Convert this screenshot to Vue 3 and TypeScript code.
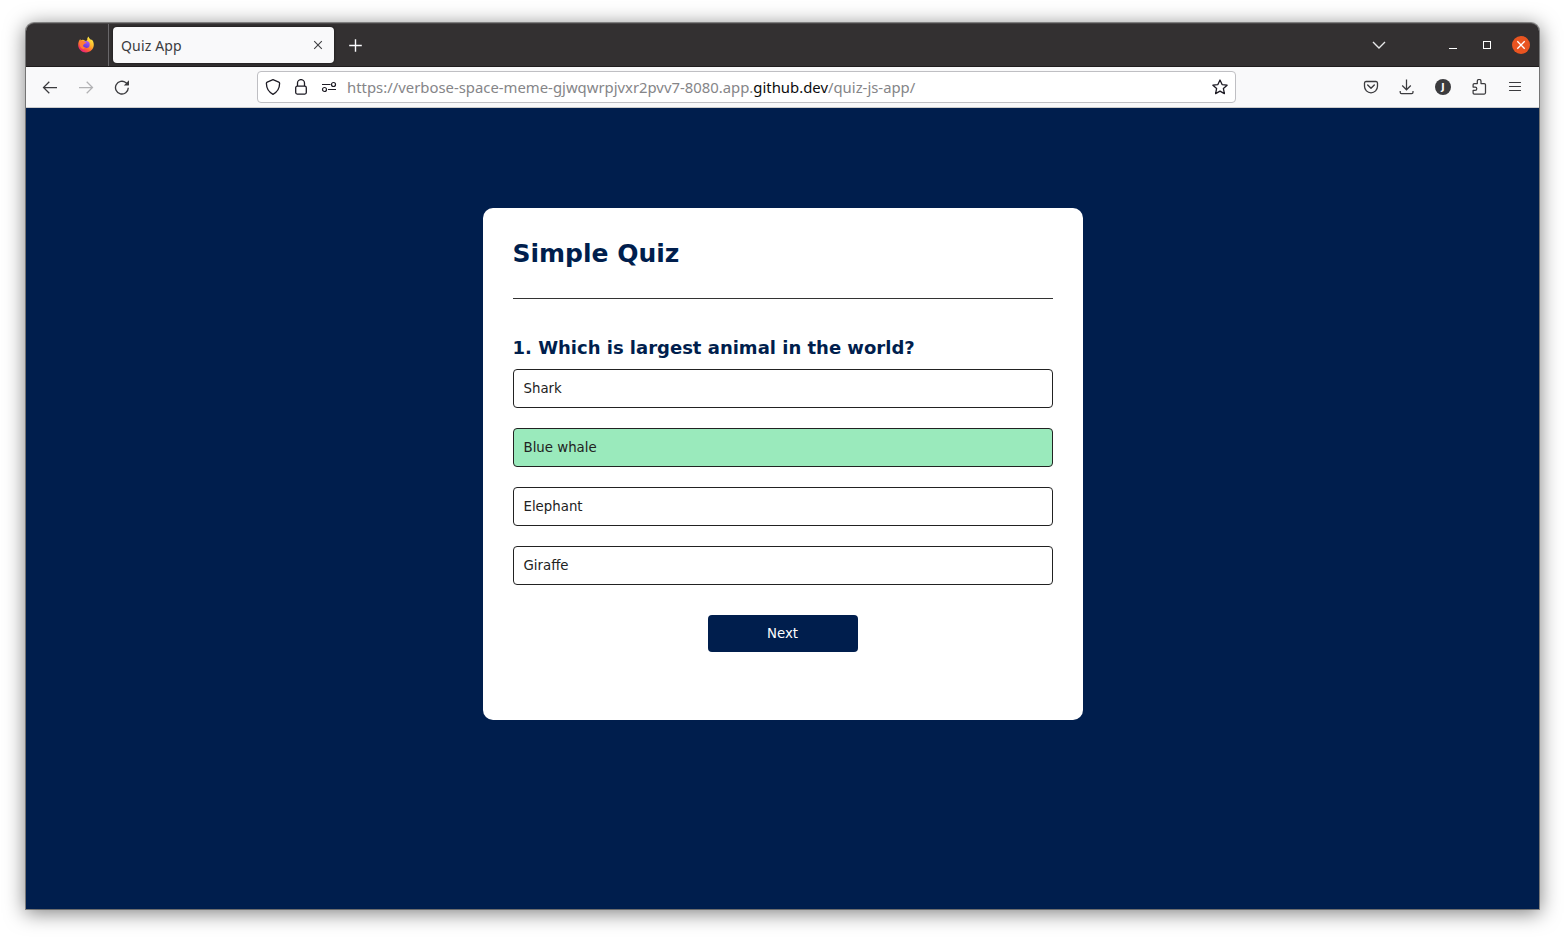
<script setup lang="ts">
import { ref } from 'vue'

interface Answer {
  text: string
  correct: boolean
}

const question = '1. Which is largest animal in the world?'
const answers: Answer[] = [
  { text: 'Shark', correct: false },
  { text: 'Blue whale', correct: true },
  { text: 'Elephant', correct: false },
  { text: 'Giraffe', correct: false },
]
const selected = ref<number>(1)
</script>

<template>
  <div class="desktop">
    <div class="window">
      <header class="tabbar">
        <div class="pinned">
          <svg width="18" height="18" viewBox="0 0 18 18">
            <defs>
              <linearGradient id="flame" x1="0.85" y1="0.1" x2="0.25" y2="1">
                <stop offset="0" stop-color="#fff044" />
                <stop offset="0.4" stop-color="#ffb02c" />
                <stop offset="0.7" stop-color="#ff5a36" />
                <stop offset="1" stop-color="#e31587" />
              </linearGradient>
              <linearGradient id="globe" x1="0.7" y1="0" x2="0.3" y2="1">
                <stop offset="0" stop-color="#a95cff" />
                <stop offset="1" stop-color="#5b35d8" />
              </linearGradient>
            </defs>
            <path d="M1.2 9.300C1 6.900 2 4.700 3.300 3.100L3.700 4.500C4.500 3.900 5.500 3.700 6.500 3.900L9 4.900L10.300 4C10 2.400 10.600 1.100 11.600.4C11.900 2.200 13 2.800 14.200 3.900L14.700 3.500C16 4.700 16.900 6.700 16.800 9.100C16.600 13.400 13.200 16.500 9 16.500C4.700 16.500 1.400 13.300 1.200 9.300Z" fill="url(#flame)" />
            <circle cx="9.200" cy="8.400" r="3.500" fill="url(#globe)" />
            <path d="M2.800 5.400C4.500 4.400 6.600 4.700 7.800 6L9.600 6.200C9.300 7.100 8.500 7.200 7.700 7.600C6.900 8.100 7.100 8.800 6.200 9C5.600 10.900 7.400 11.900 9.300 11.300L6.500 12.900C3.700 12.400 2.100 9.400 2.800 5.400Z" fill="#ff7d35" />
          </svg>
        </div>
        <div class="tab">
          <span class="tab-title">Quiz App</span>
          <svg class="tab-close" width="10" height="10" viewBox="0 0 10 10">
            <path d="M1.200 1.200L8.800 8.800M8.800 1.200L1.200 8.800" stroke="#3f3f42" stroke-width="1.100" fill="none" />
          </svg>
        </div>
        <svg class="new-tab" width="14" height="14" viewBox="0 0 14 14">
          <path d="M7.500 1.200V13.800M1.200 7.500H13.800" stroke="#fbfbfe" stroke-width="1.400" fill="none" />
        </svg>
        <div class="window-tools">
          <svg width="14" height="10" viewBox="0 0 14 10">
            <path d="M1 2L7 8L13 2" fill="none" stroke="#e8e8ea" stroke-width="1.400" />
          </svg>
          <svg class="minimize" width="8" height="10" viewBox="0 0 8 10">
            <path d="M0 7.500H8" stroke="#fff" />
          </svg>
          <svg class="maximize" width="8" height="8" viewBox="0 0 8 8">
            <rect x=".5" y=".5" width="7" height="7" fill="none" stroke="#fff" />
          </svg>
          <svg class="close" width="18" height="18" viewBox="0 0 18 18">
            <circle cx="9" cy="9" r="9" fill="#e95420" />
            <path d="M5.300 5.300L12.700 12.700M12.700 5.300L5.300 12.700" stroke="#fff" stroke-width="1.300" />
          </svg>
        </div>
      </header>

      <nav class="toolbar">
        <div class="nav-buttons">
          <svg width="16" height="16" viewBox="0 0 16 16">
            <path d="M15 8.500H1.600M7.300 2.700L1.500 8.500L7.300 14.300" fill="none" stroke="#3b3b3e" stroke-width="1.250" />
          </svg>
          <svg width="16" height="16" viewBox="0 0 16 16">
            <path d="M1 8.500H14.400M8.700 2.700L14.500 8.500L8.700 14.300" fill="none" stroke="#b2b2b4" stroke-width="1.250" />
          </svg>
          <svg width="16" height="16" viewBox="0 0 16 16">
            <path d="M14.300 8.800A6.400 6.400 0 1 1 12 3.700L14 5.400" fill="none" stroke="#3b3b3e" stroke-width="1.350" />
            <path d="M15 1.300V6.100A.4.4 0 0 1 14.600 6.500H9.800Z" fill="#3b3b3e" />
          </svg>
        </div>
        <div class="urlbar">
          <svg width="16" height="16" viewBox="0 0 16 16">
            <path d="M8 .7L13.800 3.100Q14.700 3.500 14.600 4.600Q14.500 12 8 15.300Q1.500 12 1.400 4.600Q1.300 3.500 2.200 3.100Z" fill="none" stroke="#1d1b24" stroke-width="1.300" stroke-linejoin="round" />
          </svg>
          <svg width="16" height="16" viewBox="0 0 16 16">
            <rect x="2.700" y="7.200" width="10.600" height="7.900" rx="1.500" fill="none" stroke="#1d1b24" stroke-width="1.300" />
            <path d="M4.500 7V4.100A3.500 3.500 0 0 1 11.500 4.100V7" fill="none" stroke="#1d1b24" stroke-width="1.300" />
          </svg>
          <svg width="16" height="16" viewBox="0 0 16 16">
            <path d="M1 5.500H9.500M7 10.500H15" stroke="#1d1b24" stroke-width="1.200" />
            <circle cx="12.500" cy="5.500" r="2" fill="none" stroke="#1d1b24" stroke-width="1.200" />
            <circle cx="3.500" cy="10.500" r="2" fill="none" stroke="#1d1b24" stroke-width="1.200" />
          </svg>
          <span class="url"><span class="url-start">https://verbose-space-meme-gjwqwrpjvxr2pvv7-8080.app.</span><span class="domain">github.dev</span><span class="url-end">/quiz-js-app/</span></span>
          <svg class="star" width="16" height="16" viewBox="0 0 16 16">
            <path d="M8 1L10.100 5.600L15.100 6.200L11.400 9.600L12.400 14.600L8 12.100L3.600 14.600L4.600 9.600L.9 6.200L5.900 5.600Z" fill="none" stroke="#1d1b24" stroke-width="1.300" stroke-linejoin="round" />
          </svg>
        </div>
        <div class="actions">
          <svg width="16" height="16" viewBox="0 0 16 16">
            <path d="M3 2.500H13A1.600 1.600 0 0 1 14.500 4.100V7.300A6.500 6.500 0 0 1 1.500 7.300V4.100A1.600 1.600 0 0 1 3 2.500Z" fill="none" stroke="#3b3b3e" stroke-width="1.300" />
            <path d="M4.700 6L8 9.200L11.300 6" fill="none" stroke="#3b3b3e" stroke-width="1.400" stroke-linecap="round" stroke-linejoin="round" />
          </svg>
          <svg width="16" height="16" viewBox="0 0 16 16">
            <path d="M7.500.5V10.500M3.200 6.500L7.500 10.800L11.800 6.500M1.200 12V13.200Q1.200 14.500 2.500 14.500H12.700Q14 14.500 14 13.200V12" fill="none" stroke="#3b3b3e" stroke-width="1.250" />
          </svg>
          <span class="account">J</span>
          <svg width="16" height="16" viewBox="0 0 16 16">
            <path d="M1.600 7.500V5.700Q1.600 4.500 2.800 4.500H5.800V2.300A1.850 1.850 0 0 1 9.500 2.300V4.500H12.800Q14 4.500 14 5.700V13.800Q14 15 12.800 15H2.800Q1.600 15 1.600 13.800V11.400H3.600A1.700 1.700 0 0 0 3.600 8H1.600Z" transform="translate(.5 0)" fill="none" stroke="#3b3b3e" stroke-width="1.250" stroke-linejoin="round" />
          </svg>
          <svg width="16" height="16" viewBox="0 0 16 16">
            <path d="M2.500 3.500H13.500M2.500 7.500H13.500M2.500 11.500H13.500" stroke="#3b3b3e" stroke-width="1.200" stroke-linecap="round" />
          </svg>
        </div>
      </nav>

      <main class="page">
        <section class="card">
          <h1>Simple Quiz</h1>
          <h2>{{ question }}</h2>
          <div class="answers">
            <button
              v-for="(answer, i) in answers"
              :key="answer.text"
              class="answer"
              :class="{ correct: selected === i && answer.correct }"
              @click="selected = i"
            >{{ answer.text }}</button>
          </div>
          <button class="next">Next</button>
        </section>
      </main>
    </div>
  </div>
</template>

<style>
body {
  margin: 0;
  background: #fff;
  overflow: hidden;
}
</style>

<style scoped>
* {
  box-sizing: border-box;
}
svg {
  display: block;
  flex: none;
}
.desktop {
  width: 1565px;
  height: 938px;
  padding: 23px 26px 29px;
  overflow: hidden;
}
.window {
  width: 1513px;
  height: 886px;
  display: flex;
  flex-direction: column;
  border-radius: 8px 8px 0 0;
  box-shadow: 0 0 0 1px rgba(0, 0, 0, 0.38), 0 3px 20px 1px rgba(0, 0, 0, 0.5);
}
.tabbar {
  height: 44px;
  flex: none;
  display: flex;
  align-items: center;
  background: #333031;
  border-top: 1px solid #484546;
  border-bottom: 1px solid #1f1c1d;
  border-radius: 8px 8px 0 0;
  font-family: "Noto Sans", sans-serif;
}
.pinned {
  width: 83px;
  height: 42px;
  padding: 12px 0 0 51px;
  border-right: 1px solid #69676a;
}
.tab {
  width: 221px;
  height: 36px;
  margin-left: 4px;
  padding: 0 11px 0 8px;
  display: flex;
  align-items: center;
  justify-content: space-between;
  background: #f9f9fa;
  border-radius: 4px;
  box-shadow: 0 0 3px rgba(0, 0, 0, 0.6);
}
.tab-title {
  font-size: 14px;
  line-height: 20px;
  color: #3b3b3e;
  letter-spacing: 0.15px;
  padding-top: 2px;
}
.new-tab {
  margin-left: 14px;
}
.window-tools {
  margin-left: auto;
  margin-right: 9px;
  display: flex;
  align-items: center;
}
.minimize {
  margin-left: 63px;
  margin-top: 2px;
}
.maximize {
  margin-left: 26px;
}
.close {
  margin-left: 21px;
}
.toolbar {
  height: 41px;
  flex: none;
  display: flex;
  align-items: center;
  background: #f9f9fa;
  border-bottom: 1px solid #ccc;
}
.nav-buttons {
  display: flex;
  gap: 20px;
  padding-left: 16px;
  width: 231px;
}
.urlbar {
  width: 979px;
  height: 32px;
  padding: 0 7px;
  display: flex;
  align-items: center;
  gap: 12px;
  background: #fff;
  border: 1px solid #bfbfc3;
  border-radius: 4px;
}
.url {
  margin-left: -2px;
  font: 14.87px/20px "Noto Sans", sans-serif;
  color: #858588;
  white-space: nowrap;
  padding-bottom: 1px;
}
.domain {
  color: #0c0c0d;
}
.star {
  margin-left: auto;
}
.actions {
  margin-left: auto;
  padding-right: 16px;
  display: flex;
  align-items: center;
  gap: 20px;
}
.account {
  width: 16px;
  height: 16px;
  border-radius: 50%;
  background: #3b3b3e;
  color: #fff;
  font: bold 9px/17px "DejaVu Sans", sans-serif;
  text-align: center;
}
.page {
  flex: 1;
  padding-top: 100px;
  background: #001e4d;
  font-family: "DejaVu Sans", sans-serif;
}
.card {
  width: 600px;
  height: 512px;
  margin: 0 auto;
  padding: 30px;
  display: flex;
  flex-direction: column;
  background: #fff;
  border-radius: 10px;
}
h1 {
  height: 61px;
  margin: 0;
  padding-top: 1px;
  font-size: 25px;
  line-height: 30px;
  font-weight: 700;
  color: #001e4d;
  border-bottom: 1px solid #333;
}
h2 {
  margin: 38px 0 0;
  font-size: 18px;
  line-height: 22px;
  font-weight: 700;
  color: #001e4d;
  white-space: nowrap;
}
.answers {
  margin-top: 10px;
  display: flex;
  flex-direction: column;
  gap: 20px;
}
.answer {
  height: 39px;
  margin: 0;
  padding: 1px 10px 0;
  background: #fff;
  border: 1px solid #222;
  border-radius: 4px;
  color: #222;
  font: 13.333px/16px "DejaVu Sans", sans-serif;
  text-align: left;
}
.answer.correct {
  background: #9aeabc;
}
.next {
  width: 150px;
  height: 37px;
  margin: 30px auto 0;
  padding: 1px 0 0;
  background: #001e4d;
  color: #fff;
  border: 0;
  border-radius: 4px;
  font: 13.333px/16px "DejaVu Sans", sans-serif;
}
</style>
